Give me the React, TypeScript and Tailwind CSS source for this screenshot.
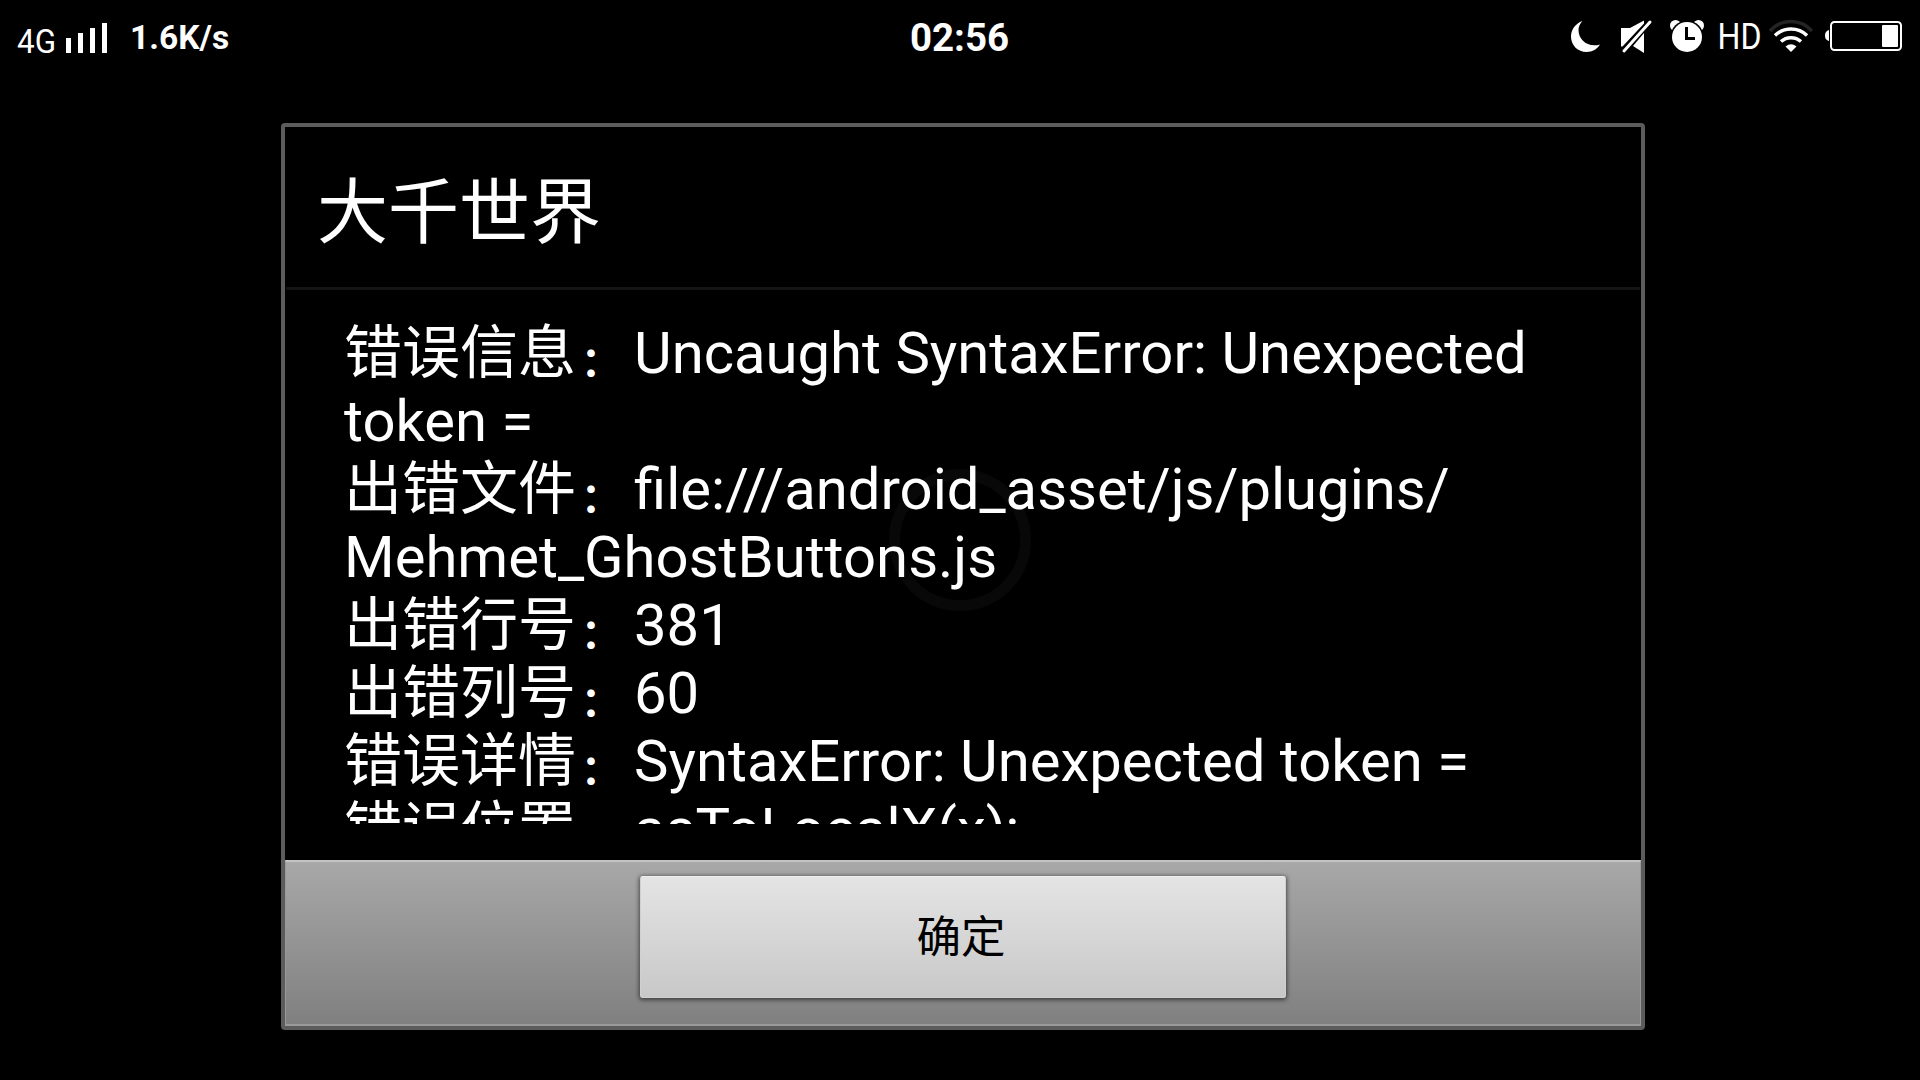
import React from 'react';

interface ErrorLine {
  label?: string;
  text: string;
}

const errorLines: ErrorLine[] = [
  { label: '错误信息', text: 'Uncaught SyntaxError: Unexpected' },
  { text: 'token =' },
  { label: '出错文件', text: 'file:///android_asset/js/plugins/' },
  { text: 'Mehmet_GhostButtons.js' },
  { label: '出错行号', text: '381' },
  { label: '出错列号', text: '60' },
  { label: '错误详情', text: 'SyntaxError: Unexpected token =' },
  { label: '错误位置', text: 'asToLocalX(x);' },
];

const SignalIcon = () => (
  <svg width="42" height="30" viewBox="0 0 42 30" fill="white">
    <rect x="0" y="15" width="5" height="15" />
    <rect x="12" y="10" width="5" height="20" />
    <rect x="24" y="5" width="5" height="25" />
    <rect x="36" y="0" width="5" height="30" />
  </svg>
);

// Moon, mute, alarm, HD, wifi and battery, from left to right
const StatusIcons = () => (
  <svg width="350" height="60" viewBox="1560 0 350 60" fill="white">
    <path d="M1582.5 21 C1575.5 23.5 1571 29.500 1571 36.500 C1571 45.500 1578 52 1586.500 52 C1592.500 52 1597.500 49 1600 44.500 C1588 48 1578.500 40 1578.500 30 C1578.500 26.500 1580 23.500 1582.500 21 Z" />

    <path d="M1621 28 H1630 L1644 20.500 V23.500 L1622.500 46.500 H1621 Z" />
    <path d="M1644 33 V53 L1633 46 Z" />
    <path d="M1624 51 L1650 22" stroke="white" strokeWidth="3" strokeLinecap="round" fill="none" />

    <circle cx="1675.500" cy="25.500" r="5.500" />
    <circle cx="1698.500" cy="25.500" r="5.500" />
    <circle cx="1687" cy="37" r="16.500" fill="black" />
    <circle cx="1687" cy="37" r="15" />
    <path d="M1686.500 27 V38.500 H1695" stroke="black" strokeWidth="3" fill="none" />

    <text x="1717.500" y="49" fontSize="36.500" textLength="44" lengthAdjust="spacingAndGlyphs">HD</text>

    <g fill="none" stroke="white" strokeWidth="3.500">
      <path d="M1770 31 A28 28 0 0 1 1812 31" stroke="#242424" />
      <path d="M1775 35.500 A23 23 0 0 1 1807 35.500" />
      <path d="M1781 41.500 A15 15 0 0 1 1801 41.500" />
    </g>
    <path d="M1791 52 L1785.500 46.500 Q1791 42 1796.500 46.500 Z" />

    <path d="M1829 30 V41 Q1825 40 1825 35.500 Q1825 31 1829 30 Z" />
    <rect x="1831" y="22" width="70" height="28" rx="3.500" fill="none" stroke="white" strokeWidth="2" />
    <rect x="1882" y="25" width="16" height="22" rx="1" />
  </svg>
);

const StatusBar = () => (
  <header className="grid h-[76px] grid-cols-3 items-start">
    <div className="flex items-start pl-4">
      <svg width="42" height="60" fill="white">
        <text x="1" y="52.500" fontSize="33" textLength="39" lengthAdjust="spacingAndGlyphs">4G</text>
      </svg>
      <div className="ml-2 pt-[23px]">
        <SignalIcon />
      </div>
      <span className="ml-[22px] pt-[19px] text-[33.5px] font-bold leading-[38px]">1.6K/s</span>
    </div>
    <time className="pr-px pt-[16px] text-center text-[38.5px] font-bold leading-[44px]">02:56</time>
    <div className="flex justify-end pr-[10px]">
      <StatusIcons />
    </div>
  </header>
);

const ErrorDialog = () => (
  <section className="ml-[281px] mt-[47px] flex h-[907px] w-[1364px] flex-col rounded-[4px] border-4 border-[#5c5c5c]">
    <h1 className="h-[160px] pl-[32px] pt-[34px] text-[71px] leading-[104px]">大千世界</h1>
    <hr className="mx-px border-t-[3px] border-[#141414]" />
    <div className="mt-[29px] h-[505px] overflow-hidden pl-[59px] text-[58px] leading-[68px]">
      {errorLines.map((line, index) => (
        <p key={index} className="h-[68px] whitespace-nowrap">
          {line.label && (
            <>
              {line.label}
              <span className="relative top-[3px] inline-block w-[58px] pl-[5px] text-[40px] font-bold leading-none">：</span>
            </>
          )}
          {line.text}
        </p>
      ))}
    </div>
    <footer className="mt-auto flex h-[166px] justify-center border border-b-2 border-t-2 border-[#999] border-t-[#c4c4c4] bg-linear-to-b from-[#a8a8a8] to-[#808080] pt-[14px]">
      <button className="h-[122px] w-[646px] rounded-[3px] border border-[#d0d0d0] border-t-[#eee] bg-linear-to-b from-[#e4e4e4] to-[#c8c8c8] pr-[4px] pt-[3px] text-[44.5px] text-black shadow-[0_1px_4px_1px_rgba(0,0,0,0.55)]">
        确定
      </button>
    </footer>
  </section>
);

export default function App() {
  return (
    <main className="relative h-[1080px] w-[1920px] overflow-hidden bg-black font-[Roboto,'Noto_Sans_CJK_SC',sans-serif] text-white">
      {/* Loading ring behind the dialog */}
      <div className="absolute left-[889px] top-[469px] size-[142px] rounded-full border-[11px] border-[#080808]" />
      <div className="relative">
        <StatusBar />
        <ErrorDialog />
      </div>
    </main>
  );
}
